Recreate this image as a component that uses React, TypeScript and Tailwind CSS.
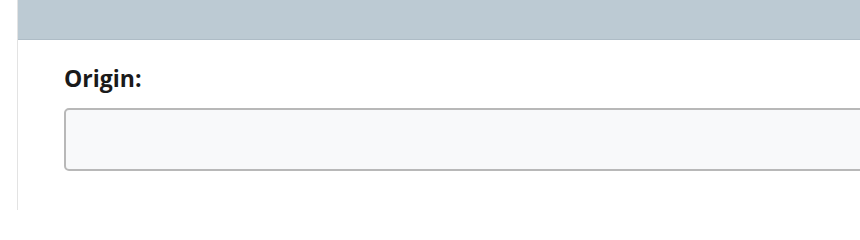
export default function App() {
    return (
        <div className="h-[210px] w-[860px] overflow-hidden bg-white pl-[17px]">
            <div className="h-full border-l border-[#e3e3e3] bg-white">
                <div className="h-[40px] border-b border-[#aebcc6] bg-[#bccad3]" />
                <div className="overflow-hidden pl-[46px] pt-[23px]">
                    <label
                        className="block text-[23px] font-bold leading-[31px] text-[#1a1a1a]"
                        style={{ fontFamily: '"Open Sans", "Liberation Sans", sans-serif' }}
                    >
                        Origin:
                    </label>
                    <input
                        type="text"
                        className="mt-[14px] block h-[63px] w-[calc(100%+20px)] rounded-[5px] border-2 border-[#b8b8b8] bg-[#f8f9fa] outline-none"
                    />
                </div>
            </div>
        </div>
    );
}
